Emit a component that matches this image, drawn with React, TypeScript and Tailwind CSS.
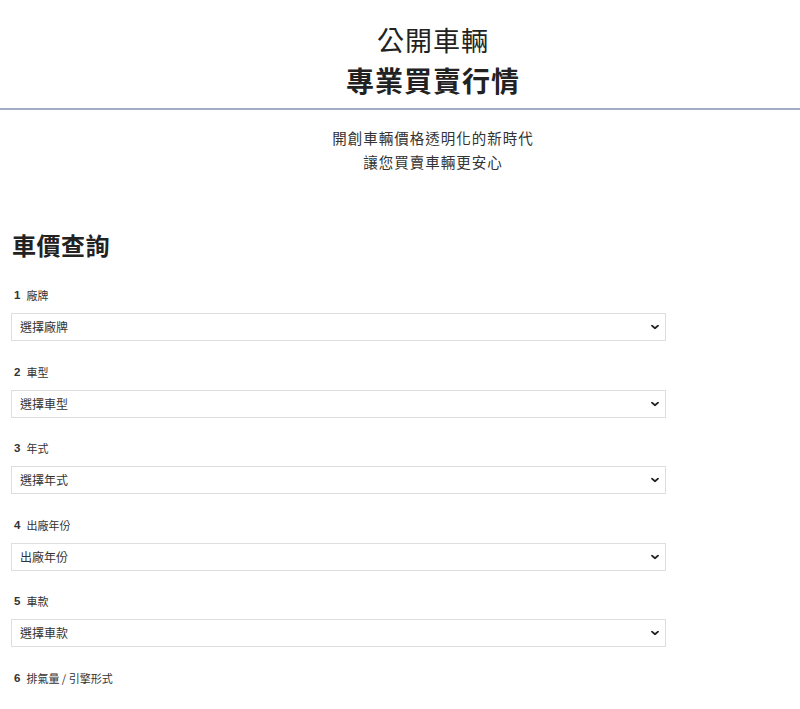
import React from 'react';

const fields = [
  { n: '1', label: '廠牌', placeholder: '選擇廠牌' },
  { n: '2', label: '車型', placeholder: '選擇車型' },
  { n: '3', label: '年式', placeholder: '選擇年式' },
  { n: '4', label: '出廠年份', placeholder: '出廠年份' },
  { n: '5', label: '車款', placeholder: '選擇車款' },
];

const font = { fontFamily: '"Noto Sans CJK TC", "Noto Sans", sans-serif' };

function Chevron() {
  return (
    <svg viewBox="0 0 10 6" className="pointer-events-none absolute right-[7px] top-1/2 h-[5px] w-[8px] -translate-y-1/2">
      <path d="M1.2 1.2 5 4.6 8.8 1.2" fill="none" stroke="#222" strokeWidth="2.2" strokeLinecap="round" strokeLinejoin="round" />
    </svg>
  );
}

export default function App() {
  return (
    <div className="min-h-[709px] bg-white text-[#222]" style={font}>
      <header className="border-b-2 border-[#a2aec6] pt-[20px] pb-[8px] pl-[66px] text-center">
        <h1 className="text-[27px] leading-[40px] font-normal tracking-[1px]">公開車輛</h1>
        <h2 className="text-[28px] leading-[40px] font-bold tracking-[1px]">專業買賣行情</h2>
      </header>

      <div className="mt-[16px] pl-[66px] text-center text-[14.5px] leading-[24px] tracking-[1px] text-[#333]">
        <p>開創車輛價格透明化的新時代</p>
        <p>讓您買賣車輛更安心</p>
      </div>

      <section className="mt-[55px] pl-[12px]">
        <h3 className="text-[24px] leading-[32px] font-bold tracking-[0.5px]">車價查詢</h3>

        <div className="mt-[25px] w-[655px] -ml-[1px]">
          {fields.map((f) => (
            <div key={f.n} className="mb-[21.5px]">
              <label className="flex items-center gap-[6px] pl-[3px] text-[11px] leading-[18px] text-[#333]">
                <span className="font-bold text-[11.5px]" style={{ fontFamily: '"Liberation Sans", Arial, sans-serif' }}>{f.n}</span>
                <span>{f.label}</span>
              </label>
              <div className="relative mt-[9px]">
                <select
                  className="block h-[28px] w-full appearance-none border border-[#dedede] bg-white pl-[8px] text-[12px] text-[#333] outline-none"
                  style={font}
                  defaultValue=""
                >
                  <option value="">{f.placeholder}</option>
                </select>
                <Chevron />
              </div>
            </div>
          ))}
          <label className="flex items-center gap-[6px] pl-[3px] text-[11px] leading-[18px] text-[#333]">
            <span className="font-bold text-[11.5px]" style={{ fontFamily: '"Liberation Sans", Arial, sans-serif' }}>6</span>
            <span>排氣量 / 引擎形式</span>
          </label>
        </div>
      </section>
    </div>
  );
}
